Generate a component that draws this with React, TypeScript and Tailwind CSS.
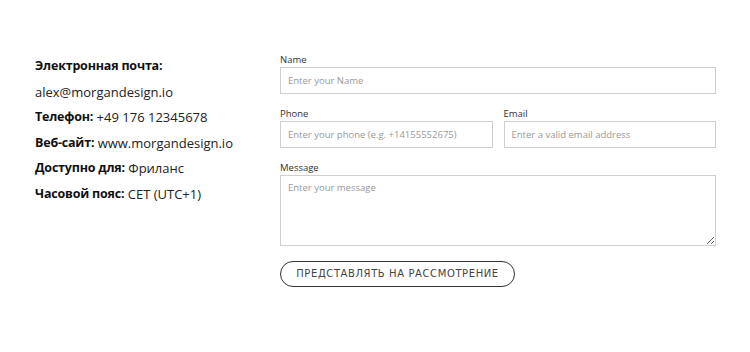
import React from "react";

export default function App() {
  const info = [
    { b: "Телефон:", t: " +49 176 12345678" },
    { b: "Веб-сайт:", t: " www.morgandesign.io" },
    { b: "Доступно для:", t: " Фриланс" },
    { b: "Часовой пояс:", t: " CET (UTC+1)" },
  ];
  const inputCls =
    "h-[27px] border border-[#cfcfcf] px-[7px] text-[9.5px] text-[#333] placeholder:text-[#999] outline-none";
  const labelCls = "text-[9.5px] text-[#333] leading-[14px]";
  const boldCls = "font-bold text-[#111] text-[12.5px] tracking-[-0.2px]";
  const rowCls = "h-[18px] flex items-center whitespace-pre";
  return (
    <div className="w-[750px] h-[352px] bg-white flex pl-[35px] pt-[53px]" style={{ fontFamily: '"Open Sans", sans-serif' }}>
      <div className="w-[245px] pt-[4px] text-[13px] text-[#222] flex flex-col gap-[7.6px] leading-[18px]">
        <div className={rowCls}>
          <span className={boldCls}>Электронная почта:</span>
        </div>
        <div className={rowCls}>alex@morgandesign.io</div>
        {info.map((r) => (
          <div key={r.b} className={rowCls}>
            <span className={boldCls}>{r.b}</span>
            <span>{r.t}</span>
          </div>
        ))}
      </div>
      <div className="w-[436px] flex flex-col">
        <label className={labelCls}>Name</label>
        <input className={inputCls} placeholder="Enter your Name" />
        <div className="flex gap-[11px] mt-[13px]">
          <div className="flex-1 flex flex-col">
            <label className={labelCls}>Phone</label>
            <input className={inputCls} placeholder="Enter your phone (e.g. +14155552675)" />
          </div>
          <div className="flex-1 flex flex-col">
            <label className={labelCls}>Email</label>
            <input className={inputCls} placeholder="Enter a valid email address" />
          </div>
        </div>
        <label className={labelCls + " mt-[13px]"}>Message</label>
        <textarea
          className="h-[71px] border border-[#cfcfcf] px-[7px] py-[5px] text-[9.5px] placeholder:text-[#999] outline-none resize-y"
          placeholder="Enter your message"
        />
        <div className="mt-[13px]">
          <button
            className="w-[235px] h-[26px] rounded-full border-[1.5px] border-[#333] text-[10px] tracking-[0.6px] text-[#444] uppercase"
            style={{ fontFamily: '"DejaVu Sans", sans-serif' }}
          >
            Представлять на рассмотрение
          </button>
        </div>
      </div>
    </div>
  );
}
